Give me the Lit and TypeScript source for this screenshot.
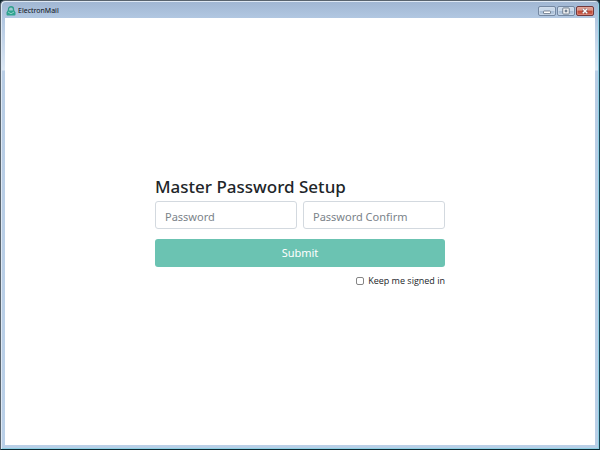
import { LitElement, html, css } from "lit";
import { customElement } from "lit/decorators.js";

@customElement("app-root")
export class AppRoot extends LitElement {
  static styles = css`
    :host {
      display: block;
      min-height: 100vh;
      background: #10242c;
      font-family: "Open Sans", "Noto Sans", sans-serif;
      color: #212529;
    }
    * {
      box-sizing: border-box;
    }
    .window {
      display: flex;
      flex-direction: column;
      min-height: 100vh;
      padding: 0 4px 4px;
      border: 1px solid #59646e;
      border-right-color: #1d4554;
      border-bottom-color: #0d2a33;
      border-radius: 5px 5px 0 0;
      background: linear-gradient(#a0b6d2 0, #b1c7e1 17px, #dbe7f4 69px, #b8cde5 70px, #bad0e8 100%);
      box-shadow: inset 1px 1px 0 #dfe9f4, inset -1px -1px 0 #8fd0e4;
    }
    .titlebar {
      display: flex;
      align-items: center;
      justify-content: space-between;
      height: 17px;
      padding: 3px 1px 0;
    }
    .brand {
      display: flex;
      align-items: center;
      gap: 2px;
      font-family: "Noto Sans", "Open Sans", sans-serif;
      font-size: 7px;
      line-height: 10px;
      color: #0b1018;
    }
    .brand svg {
      width: 10px;
      height: 10px;
    }
    .controls {
      display: flex;
      gap: 1px;
    }
    .control {
      display: flex;
      align-items: center;
      justify-content: center;
      width: 18px;
      height: 10px;
      padding: 0;
      border: 1px solid #7488a2;
      border-radius: 2px;
      background: linear-gradient(#c9d8e9 45%, #a5bad3 50%, #bacde2);
      box-shadow: inset 0 0 0 1px #d5e1ee88;
    }
    .control svg {
      width: 8px;
      height: 8px;
    }
    .close {
      border-color: #71383c;
      background: linear-gradient(#dc9a8e 40%, #bd4632 50%, #d0695a);
      box-shadow: inset 0 0 0 1px #eeb6a866;
    }
    .page {
      flex: 1;
      display: flex;
      align-items: center;
      justify-content: center;
      background: #fff;
    }
    form {
      width: 50%;
      min-width: 240px;
      max-width: 290px;
    }
    h1 {
      margin: 0 0 3px;
      font-family: "Noto Sans", "Open Sans", sans-serif;
      font-size: 17px;
      line-height: 22px;
      font-weight: 500;
    }
    .fields {
      display: grid;
      grid-template-columns: 1fr 1fr;
      gap: 6px;
    }
    .field {
      width: 100%;
      height: 28px;
      min-width: 0;
      padding: 2px 9px 0;
      border: 1px solid #d3d9df;
      border-radius: 3px;
      background: #fff;
      color: inherit;
      font: 11px/16px "Noto Sans", "Open Sans", sans-serif;
    }
    .field::placeholder {
      color: #7b838a;
      opacity: 1;
    }
    .submit {
      display: block;
      width: 100%;
      height: 28px;
      margin: 10px 0 8px;
      padding: 0;
      border: 0;
      border-radius: 3px;
      background: #6bc3b2;
      color: #fff;
      font: 11px/16px "Noto Sans", "Open Sans", sans-serif;
    }
    .keep {
      display: flex;
      align-items: center;
      justify-content: flex-end;
      gap: 4px;
      font-size: 9px;
      line-height: 12px;
    }
    .keep input {
      appearance: none;
      width: 8px;
      height: 8px;
      margin: 0;
      border: 1px solid #858585;
      border-radius: 2px;
      background: #fff;
    }
    .keep input:checked {
      background: #6bc3b2;
    }
  `;

  render() {
    return html`
      <div class="window">
        <header class="titlebar">
          <div class="brand">
            <svg viewBox="0 0 20 20" aria-hidden="true">
              <path d="M5 10V6.5a5 5 0 0 1 10 0V10" fill="#9ccbd0" stroke="#2f9f8c" stroke-width="2.6" />
              <path d="M3 9h14l2 4v4a2 2 0 0 1-2 2h-14a2 2 0 0 1-2-2v-4z" fill="#2fa38f" />
              <path d="M4 12l6 3.5 6-3.5" fill="none" stroke="#a7dcd4" stroke-width="1.6" />
            </svg>
            <span>ElectronMail</span>
          </div>
          <div class="controls">
            <button class="control" type="button" aria-label="Minimize">
              <svg viewBox="0 0 8 8"><rect x=".5" y="4" width="7" height="2.6" rx=".6" fill="#fff" stroke="#5d6b7c" stroke-width=".8" /></svg>
            </button>
            <button class="control" type="button" aria-label="Maximize">
              <svg viewBox="0 0 8 8">
                <rect x=".8" y="1" width="6.4" height="6" rx=".6" fill="#fff" stroke="#5d6b7c" stroke-width=".9" />
                <rect x="3" y="3" width="2" height="2" fill="#8496ab" stroke="#5d6b7c" stroke-width=".6" />
              </svg>
            </button>
            <button class="control close" type="button" aria-label="Close">
              <svg viewBox="0 0 8 8">
                <path d="M1.8 1.8l4.4 4.4M6.2 1.8L1.8 6.2" stroke="#6e4045" stroke-width="2.6" />
                <path d="M1.8 1.8l4.4 4.4M6.2 1.8L1.8 6.2" stroke="#fff" stroke-width="1.6" />
              </svg>
            </button>
          </div>
        </header>
        <main class="page">
          <form @submit=${(e: Event) => e.preventDefault()}>
            <h1>Master Password Setup</h1>
            <div class="fields">
              <input class="field" type="password" placeholder="Password" aria-label="Password" />
              <input class="field" type="password" placeholder="Password Confirm" aria-label="Password Confirm" />
            </div>
            <button class="submit" type="submit">Submit</button>
            <div class="keep">
              <input id="keep" type="checkbox" />
              <label for="keep">Keep me signed in</label>
            </div>
          </form>
        </main>
      </div>
    `;
  }
}
